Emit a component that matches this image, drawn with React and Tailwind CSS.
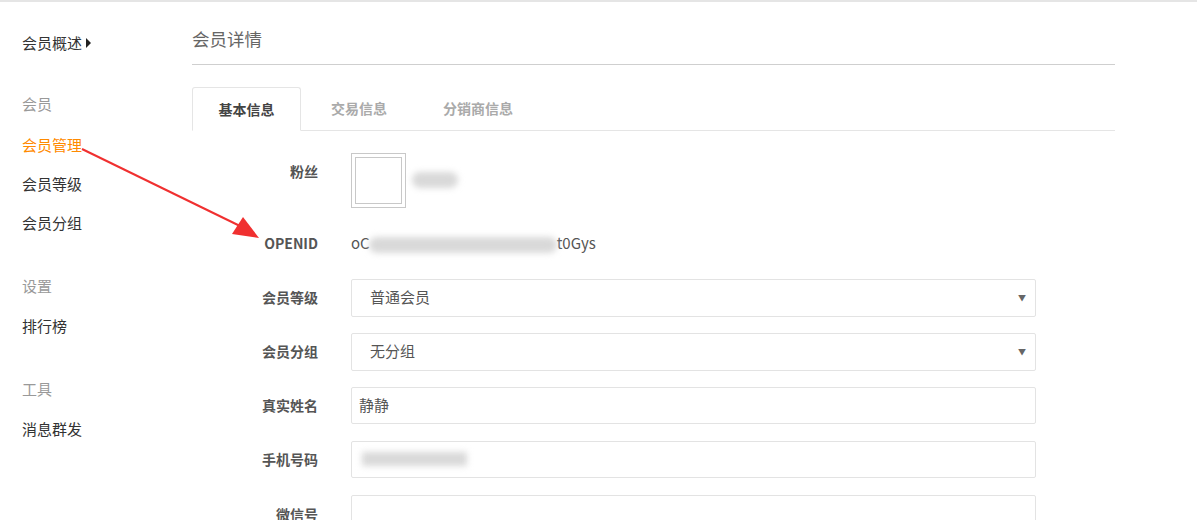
import React from 'react'

const font = { fontFamily: '"Noto Sans CJK SC", "Noto Sans", sans-serif' }

const Blur = ({ className }) => (
  <div className={'bg-[#d9d9d9] blur-[3px] rounded-full ' + className} />
)

const Row = ({ label, children, className = '', labelClass = '' }) => (
  <div className={'flex ' + className}>
    <div className={'w-[126px] text-right text-[14px] font-bold text-[#555] ' + labelClass}>{label}</div>
    <div className="ml-[33px] flex-1 flex items-center">{children}</div>
  </div>
)

const Select = ({ value }) => (
  <div className="w-[685px] h-[38px] border border-[#e3e3e3] rounded-[2px] flex items-center justify-between pl-[18px] pr-[9px] text-[15px] text-[#555]">
    <span>{value}</span>
    <span className="text-[8px] text-[#666]">▼</span>
  </div>
)

const Input = ({ children }) => (
  <div className="w-[685px] h-[37px] border border-[#e3e3e3] rounded-[2px] flex items-center pl-[7px] text-[15px] text-[#555]">
    {children}
  </div>
)

export default function App() {
  return (
    <div className="relative w-[1197px] h-[520px] overflow-hidden bg-white border-t-2 border-[#e5e5e5]" style={font}>
      <div className="flex">
        {/* sidebar */}
        <div className="w-[192px] pl-[22px] pt-[30px] text-[15px]">
          <div className="flex items-center text-[#333] h-[22px]">
            会员概述
            <span className="ml-[4px] w-0 h-0 border-y-[5px] border-y-transparent border-l-[5px] border-l-[#222]" />
          </div>
          <div className="mt-[39px] text-[#999] h-[22px]">会员</div>
          <div className="mt-[19px] text-[#ff8a00] h-[22px]">会员管理</div>
          <div className="mt-[17px] text-[#333] h-[22px]">会员等级</div>
          <div className="mt-[17px] text-[#333] h-[22px]">会员分组</div>
          <div className="mt-[41px] text-[#999] h-[22px]">设置</div>
          <div className="mt-[18px] text-[#333] h-[22px]">排行榜</div>
          <div className="mt-[41px] text-[#999] h-[22px]">工具</div>
          <div className="mt-[18px] text-[#333] h-[22px]">消息群发</div>
        </div>

        {/* main */}
        <div className="w-[923px]">
          <div className="pt-[25px] pb-[13px] text-[17.5px] text-[#666] border-b border-[#cfcfcf] leading-[24px]">会员详情</div>
          <div className="mt-[22px] flex border-b border-[#e5e5e5] h-[44px] text-[14px] font-bold">
            <div className="w-[109px] -mb-px bg-white border border-[#e5e5e5] border-b-white rounded-t-[3px] flex items-center justify-center text-[#444]">基本信息</div>
            <div className="w-[116px] flex items-center justify-center text-[#aaa]">交易信息</div>
            <div className="w-[122px] flex items-center justify-center text-[#aaa]">分销商信息</div>
          </div>

          <Row label="粉丝" className="mt-[22px]" labelClass="pt-[8px]">
            <div className="w-[55px] h-[55px] border border-[#c8c8c8] p-[3px]">
              <div className="w-full h-full border border-[#c8c8c8]" />
            </div>
            <Blur className="ml-[6px] mb-[1px] w-[46px] h-[16px]" />
          </Row>

          <Row label="OPENID" className="mt-[24px] items-center">
            <span className="text-[15px] text-[#555]">oC</span>
            <Blur className="w-[188px] h-[16px] mt-[4px] -ml-[1px]" />
            <span className="text-[15px] text-[#555]">t0Gys</span>
          </Row>

          <Row label="会员等级" className="mt-[24px] items-center">
            <Select value="普通会员" />
          </Row>
          <Row label="会员分组" className="mt-[16px] items-center">
            <Select value="无分组" />
          </Row>
          <Row label="真实姓名" className="mt-[16px] items-center">
            <Input>静静</Input>
          </Row>
          <Row label="手机号码" className="mt-[17px] items-center">
            <Input>
              <Blur className="ml-[3px] w-[105px] h-[14px] rounded-none" />
            </Input>
          </Row>
          <Row label="微信号" className="mt-[17px]" labelClass="pt-[9px]">
            <Input />
          </Row>
        </div>
      </div>

      {/* annotation arrow */}
      <svg className="absolute left-0 top-0 pointer-events-none" width="1197" height="520">
        <line x1="82" y1="147" x2="240" y2="224" stroke="#f03030" strokeWidth="2" />
        <polygon points="259,236 232,232 243,215" fill="#f03030" />
      </svg>
    </div>
  )
}
